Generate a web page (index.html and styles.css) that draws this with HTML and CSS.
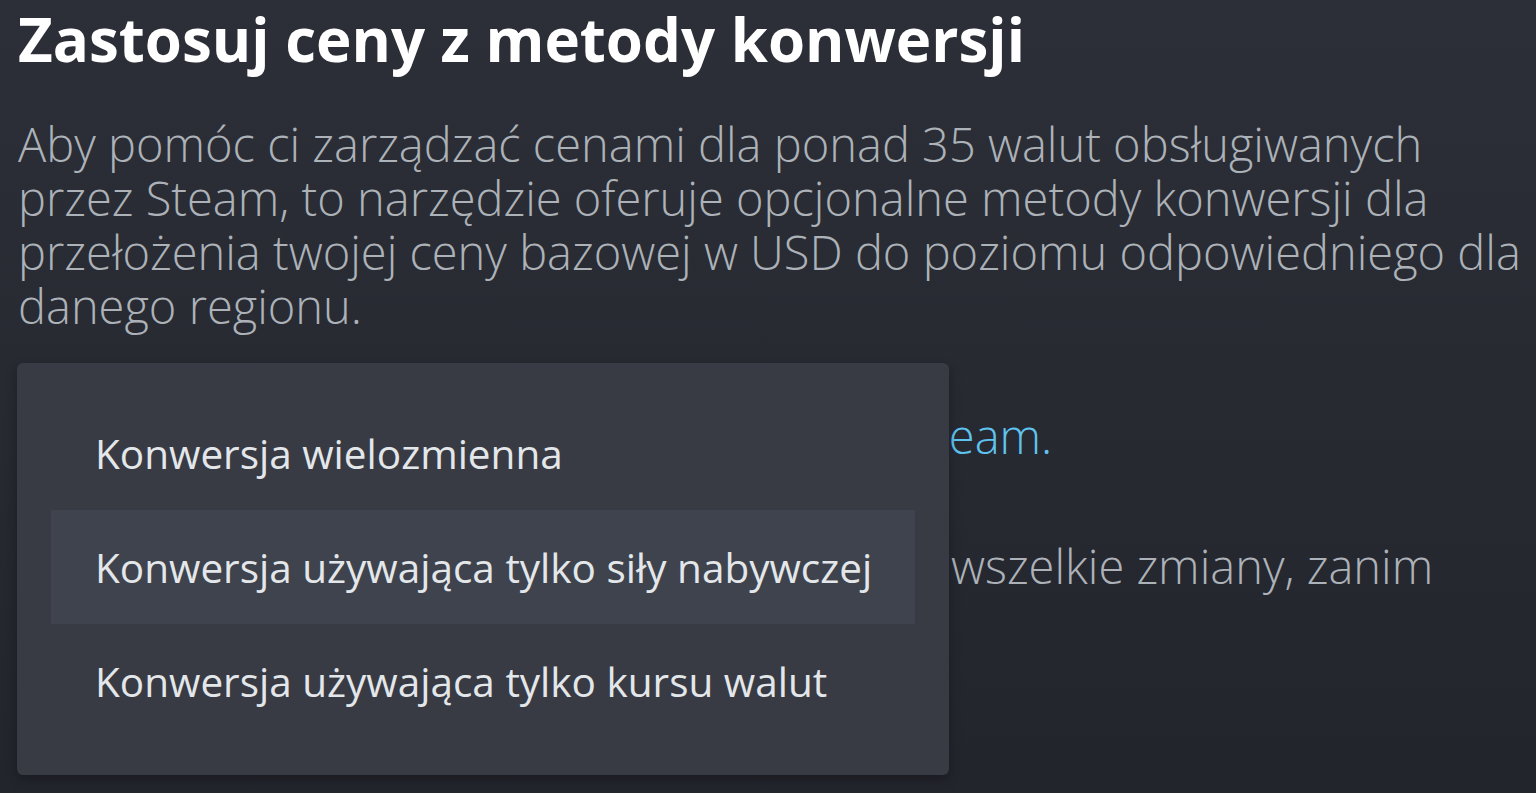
FILE: index.html
```html
<!DOCTYPE html>
<html lang="pl">
<head>
<meta charset="utf-8">
<link rel="stylesheet" href="styles.css">
</head>
<body>
<div class="page">
  <h1 class="title">Zastosuj ceny z metody konwersji</h1>
  <p class="text">Aby pomóc ci zarządzać cenami dla ponad 35 walut obsługiwanych<br>przez Steam, to narzędzie oferuje opcjonalne metody konwersji dla<br>przełożenia twojej ceny bazowej w USD do poziomu odpowiedniego dla<br>danego regionu.</p>
  <p class="text gap">Więcej informacji podano w <a class="link" href="#">dokumentacji Steam.</a></p>
  <p class="text gap">Po wyborze metody będziesz mógł obejrzeć wszelkie zmiany, zanim</p>
  <div class="dropdown">
    <div class="item">Konwersja wielozmienna</div>
    <div class="item active">Konwersja używająca tylko siły nabywczej</div>
    <div class="item">Konwersja używająca tylko kursu walut</div>
  </div>
</div>
</body>
</html>
```

FILE: styles.css
```css
html, body {
  margin: 0;
  padding: 0;
  height: 100%;
}
body {
  background: linear-gradient(180deg, #2c2f37 0%, #23252d 100%);
  font-family: "Open Sans", "Noto Sans", sans-serif;
  overflow: hidden;
}
.page {
  position: relative;
  padding: 0 18px;
}
.title {
  margin: 0;
  padding-top: 3px;
  font-size: 60px;
  line-height: 72px;
  font-weight: 700;
  color: #ffffff;
}
.text {
  margin: 42px 0 0 0;
  font-size: 47px;
  line-height: 54px;
  font-weight: 300;
  color: #acb2b8;
  white-space: nowrap;
}
.gap {
  margin-top: 76px;
}
.link {
  color: #5fc3ef;
  text-decoration: none;
}
.dropdown {
  position: absolute;
  left: 17px;
  top: 363px;
  width: 932px;
  box-sizing: border-box;
  padding: 33px 34px 37px;
  background: #383b44;
  border-radius: 6px;
  box-shadow: 0 4px 12px rgba(0,0,0,0.3);
  display: flex;
  flex-direction: column;
}
.item {
  height: 114px;
  display: flex;
  align-items: center;
  padding-left: 44px;
  font-size: 40.5px;
  font-weight: 400;
  color: #e4e7ea;
}
.item.active {
  background: #3e434d;
}
```
